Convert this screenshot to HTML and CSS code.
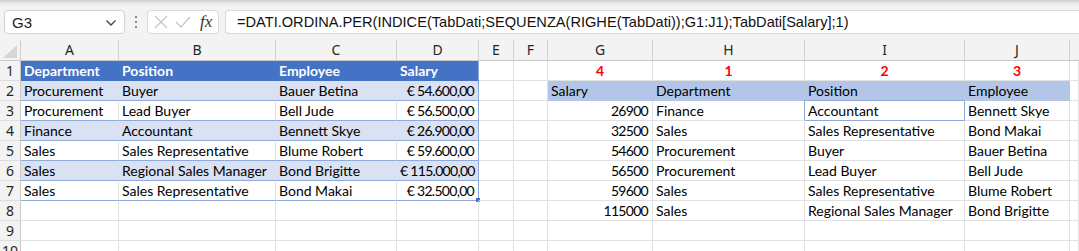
FILE: index.html
```html
<!DOCTYPE html>
<html lang="it">
<head>
  <meta charset="UTF-8">
  <title>DATI.ORDINA.PER</title>
  <link rel="stylesheet" href="styles.css">
</head>
<body>

  <div class="toolbar">
    <div class="namebox">
      <span>G3</span>
      <svg class="chev" width="12" height="8" viewBox="0 0 12 8"><path d="M1.5 1.5 L6 6 L10.5 1.5" fill="none" stroke="#444" stroke-width="1.4"/></svg>
    </div>
    <div class="grip"><i></i><i></i><i></i></div>
    <div class="fxbox">
      <svg width="14" height="14" viewBox="0 0 14 14"><path d="M1 1 L13 13 M13 1 L1 13" stroke="#c4c4c4" stroke-width="1.2"/></svg>
      <svg width="16" height="14" viewBox="0 0 16 14"><path d="M1 7 L6 12 L15 2" fill="none" stroke="#c4c4c4" stroke-width="1.2"/></svg>
      <span class="fx">fx</span>
    </div>
    <div class="formula">=DATI.ORDINA.PER(INDICE(TabDati;SEQUENZA(RIGHE(TabDati));G1:J1);TabDati[Salary];1)</div>
  </div>

  <div class="sheet">
    <div class="ch corner"><svg width="14" height="13" viewBox="0 0 14 13"><path d="M14 0 L14 13 L0 13 Z" fill="#d6d6d6"/></svg></div>
    <div class="ch">A</div><div class="ch">B</div><div class="ch">C</div><div class="ch">D</div><div class="ch">E</div>
    <div class="ch">F</div><div class="ch">G</div><div class="ch">H</div><div class="ch">I</div><div class="ch">J</div><div class="ch last"></div>

    <!-- row 1 -->
    <div class="rh">1</div>
    <div class="c th">Department</div><div class="c th">Position</div><div class="c th">Employee</div><div class="c th end">Salary</div>
    <div class="c"></div><div class="c"></div>
    <div class="c rank">4</div><div class="c rank">1</div><div class="c rank">2</div><div class="c rank">3</div><div class="c"></div>

    <!-- row 2 -->
    <div class="rh">2</div>
    <div class="c band">Procurement</div><div class="c band">Buyer</div><div class="c band">Bauer Betina</div><div class="c band end num">€ 54.600,00</div>
    <div class="c"></div><div class="c"></div>
    <div class="c hd2">Salary</div><div class="c hd2">Department</div><div class="c hd2">Position</div><div class="c hd2">Employee</div><div class="c"></div>

    <!-- row 3 -->
    <div class="rh">3</div>
    <div class="c tb">Procurement</div><div class="c tb">Lead Buyer</div><div class="c tb">Bell Jude</div><div class="c tb end num">€ 56.500,00</div>
    <div class="c"></div><div class="c"></div>
    <div class="c num">26900</div><div class="c">Finance</div><div class="c pick">Accountant</div><div class="c">Bennett Skye</div><div class="c"></div>

    <!-- row 4 -->
    <div class="rh">4</div>
    <div class="c band">Finance</div><div class="c band">Accountant</div><div class="c band">Bennett Skye</div><div class="c band end num">€ 26.900,00</div>
    <div class="c"></div><div class="c"></div>
    <div class="c num">32500</div><div class="c">Sales</div><div class="c">Sales Representative</div><div class="c">Bond Makai</div><div class="c"></div>

    <!-- row 5 -->
    <div class="rh">5</div>
    <div class="c tb">Sales</div><div class="c tb">Sales Representative</div><div class="c tb">Blume Robert</div><div class="c tb end num">€ 59.600,00</div>
    <div class="c"></div><div class="c"></div>
    <div class="c num">54600</div><div class="c">Procurement</div><div class="c">Buyer</div><div class="c">Bauer Betina</div><div class="c"></div>

    <!-- row 6 -->
    <div class="rh">6</div>
    <div class="c band">Sales</div><div class="c band">Regional Sales Manager</div><div class="c band">Bond Brigitte</div><div class="c band end num">€ 115.000,00</div>
    <div class="c"></div><div class="c"></div>
    <div class="c num">56500</div><div class="c">Procurement</div><div class="c">Lead Buyer</div><div class="c">Bell Jude</div><div class="c"></div>

    <!-- row 7 -->
    <div class="rh">7</div>
    <div class="c tb">Sales</div><div class="c tb">Sales Representative</div><div class="c tb">Bond Makai</div><div class="c tb end num">€ 32.500,00<span class="handle"></span></div>
    <div class="c"></div><div class="c"></div>
    <div class="c num">59600</div><div class="c">Sales</div><div class="c">Sales Representative</div><div class="c">Blume Robert</div><div class="c"></div>

    <!-- row 8 -->
    <div class="rh">8</div>
    <div class="c"></div><div class="c"></div><div class="c"></div><div class="c"></div><div class="c"></div><div class="c"></div>
    <div class="c num">115000</div><div class="c">Sales</div><div class="c">Regional Sales Manager</div><div class="c">Bond Brigitte</div><div class="c"></div>

    <!-- row 9 -->
    <div class="rh">9</div>
    <div class="c"></div><div class="c"></div><div class="c"></div><div class="c"></div><div class="c"></div><div class="c"></div>
    <div class="c"></div><div class="c"></div><div class="c"></div><div class="c"></div><div class="c"></div>

    <!-- row 10 -->
    <div class="rh">10</div>
    <div class="c"></div><div class="c"></div><div class="c"></div><div class="c"></div><div class="c"></div><div class="c"></div>
    <div class="c"></div><div class="c"></div><div class="c"></div><div class="c"></div><div class="c"></div>
  </div>

</body>
</html>
```

FILE: styles.css
```css
html, body {
  margin: 0;
  height: 100%;
  overflow: hidden;
  background: #fff;
}
.toolbar {
  height: 40px;
  box-sizing: border-box;
  display: flex;
  align-items: flex-start;
  padding: 10px 0 0 4px;
  background: linear-gradient(#cfcfcf 0, #e6e6e6 3px, #f3f3f3 6px);
  font-family: "Liberation Sans", Arial, sans-serif;
}
.namebox {
  width: 121px;
  height: 24px;
  box-sizing: border-box;
  border: 1px solid #d2d2d2;
  border-radius: 4px;
  background: #fff;
  display: flex;
  align-items: center;
  justify-content: space-between;
  padding: 0 7px 0 7px;
  font-size: 15px;
  color: #222;
}
.chev {
  margin-top: 2px;
}
.grip {
  width: 22px;
  height: 24px;
  display: flex;
  flex-direction: column;
  align-items: center;
  justify-content: center;
  gap: 3px;
}
.grip i {
  width: 2px;
  height: 2px;
  background: #8a8a8a;
}
.fxbox {
  width: 72px;
  height: 24px;
  box-sizing: border-box;
  border: 1px solid #d8d8d8;
  border-radius: 4px;
  background: #fff;
  display: flex;
  align-items: center;
  gap: 7px;
  padding-left: 6px;
}
.fx {
  font-family: "Liberation Serif", "Times New Roman", serif;
  font-style: italic;
  font-size: 17px;
  color: #333;
  margin-left: 2px;
}
.formula {
  flex: 1;
  height: 24px;
  margin-left: 6px;
  box-sizing: border-box;
  border: 1px solid #d8d8d8;
  border-right: none;
  border-radius: 4px 0 0 4px;
  background: #fff;
  padding-left: 11px;
  font-size: 14.6px;
  line-height: 22px;
  color: #111;
  white-space: nowrap;
}

.sheet {
  display: grid;
  grid-template-columns: 21px 98px 157px 121px 82px 35px 34px 105px 152px 160px 105px 1fr;
  grid-template-rows: 21px;
  grid-auto-rows: 20px;
}
.ch {
  box-sizing: border-box;
  background: #f3f3f3;
  border-right: 1px solid #d0d0d0;
  border-bottom: 1px solid #c8c8c8;
  text-align: center;
  font-family: "Noto Sans", sans-serif;
  font-size: 14px;
  line-height: 20px;
  color: #262626;
}
.corner {
  display: flex;
  align-items: flex-end;
  justify-content: flex-end;
  padding: 0 3px 2px 0;
}
.last {
  border-right: none;
}
.rh {
  box-sizing: border-box;
  background: #f3f3f3;
  border-right: 1px solid #c8c8c8;
  border-bottom: 1px solid #dcdcdc;
  text-align: center;
  font-family: "Noto Sans", sans-serif;
  font-size: 14px;
  line-height: 19px;
  color: #262626;
}
.c {
  position: relative;
  box-sizing: border-box;
  border-right: 1px solid #e1e1e1;
  border-bottom: 1px solid #e1e1e1;
  padding: 0 3px;
  font-family: Lato, "Liberation Sans", sans-serif;
  font-size: 14px;
  line-height: 19px;
  color: #000;
  white-space: nowrap;
}
.num {
  text-align: right;
  letter-spacing: -0.7px;
  padding-right: 4px;
}
.th {
  background: #4472c4;
  border-right-color: #4472c4;
  border-bottom-color: #4472c4;
  color: #fff;
  font-weight: bold;
}
.band {
  background: #d9e1f2;
  border-right-color: #d9e1f2;
  border-bottom-color: #8ea9db;
}
.tb {
  border-bottom-color: #8ea9db;
}
.end {
  border-right-color: #8ea9db;
}
.rank {
  text-align: center;
  color: #ff0000;
  font-weight: bold;
}
.hd2 {
  background: #b4c6e7;
  border-right-color: #b4c6e7;
  border-bottom-color: #b4c6e7;
}
.pick {
  border-right-color: #8ea9db;
  border-bottom-color: #8ea9db;
  box-shadow: -1px -1px 0 #8ea9db;
}
.handle {
  position: absolute;
  right: -2px;
  bottom: -2px;
  width: 4px;
  height: 4px;
  background: #4472c4;
}
```
